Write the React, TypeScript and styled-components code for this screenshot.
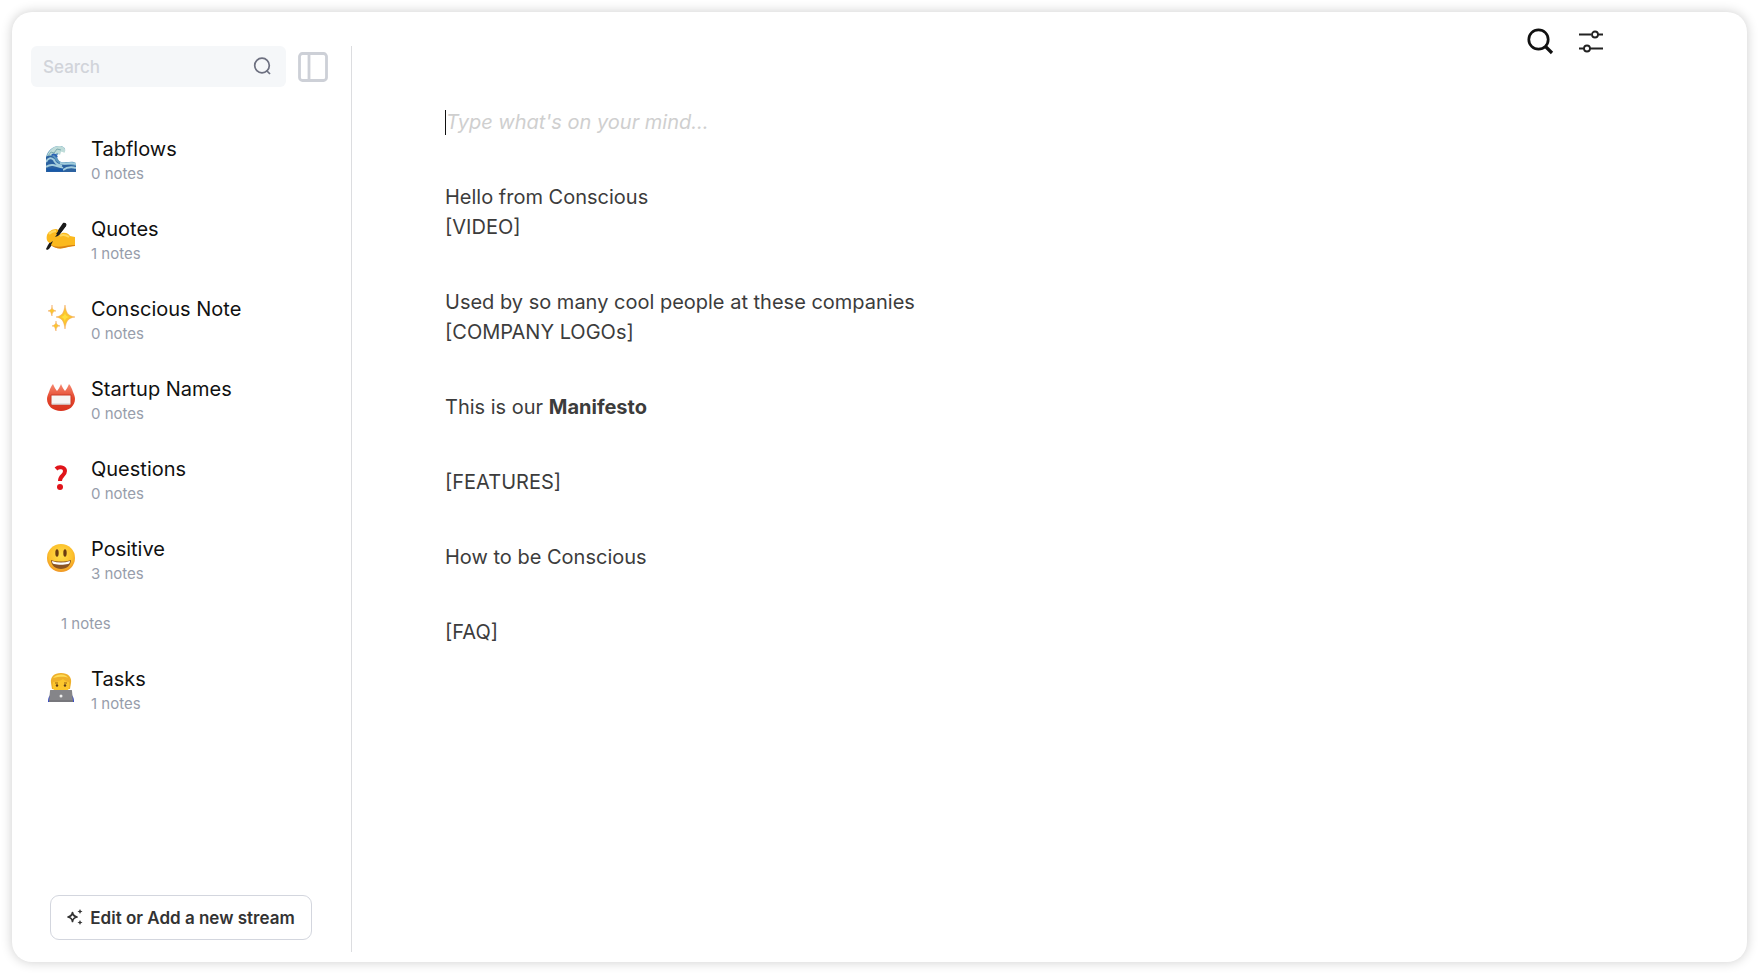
import React from "react";
import styled, { createGlobalStyle } from "styled-components";

const GlobalStyle = createGlobalStyle`
  * { box-sizing: border-box; }
  body {
    margin: 0;
    background: #fff;
    font-family: Inter, "Liberation Sans", sans-serif;
  }
  button, input { font-family: inherit; }
`;

const Page = styled.div`
  display: flex;
  min-height: 100vh;
  padding: 12px;
`;

const Card = styled.div`
  flex: 1;
  display: flex;
  min-width: 0;
  background: #fff;
  border-radius: 20px;
  box-shadow: 0 0 12px rgba(0, 0, 0, 0.2);
`;

const Sidebar = styled.aside`
  flex: none;
  display: flex;
  flex-direction: column;
  width: 321px;
  margin: 34px 0 10px 19px;
  border-right: 1px solid #dcdde0;
`;

const SearchRow = styled.div`
  display: flex;
  align-items: center;
  gap: 12px;
`;

const SearchBox = styled.label`
  display: flex;
  align-items: center;
  width: 255px;
  height: 41px;
  padding: 0 15px 0 12px;
  background: #f5f7f9;
  border-radius: 6px;
`;

const SearchInput = styled.input`
  flex: 1;
  min-width: 0;
  padding: 0;
  border: 0;
  outline: 0;
  background: transparent;
  font-size: 17px;
  font-weight: 500;
  line-height: 24px;
  color: #333;
  &::placeholder { color: #d1d4da; opacity: 1; }
`;

const IconButton = styled.button`
  display: flex;
  padding: 0;
  border: 0;
  background: transparent;
  cursor: pointer;
`;

const StreamList = styled.ul`
  display: flex;
  flex-direction: column;
  gap: 30px;
  margin: 47px 0 0;
  padding: 0 15px;
  list-style: none;
`;

const Stream = styled.li`
  display: flex;
  gap: 15px;
`;

const Emoji = styled.span<{ $empty: boolean }>`
  flex: none;
  width: ${(p) => (p.$empty ? 0 : 30)}px;
  padding-top: ${(p) => (p.$empty ? 0 : 8)}px;
  svg { display: block; }
`;

const StreamTitle = styled.div`
  font-size: 20px;
  line-height: 30px;
  color: #111;
`;

const StreamCount = styled.div`
  font-size: 15px;
  line-height: 20px;
  color: #979dab;
`;

const AddButton = styled.button`
  display: flex;
  align-items: center;
  justify-content: center;
  gap: 7px;
  width: 262px;
  height: 45px;
  margin: auto 0 12px 19px;
  padding: 0;
  border: 1px solid #d3d6de;
  border-radius: 9px;
  background: #fff;
  font-size: 17px;
  font-weight: 600;
  color: #333;
  cursor: pointer;
`;

const Main = styled.main`
  flex: 1;
  min-width: 0;
  display: flex;
  flex-direction: column;
`;

const Toolbar = styled.header`
  display: flex;
  justify-content: flex-end;
  gap: 25px;
  padding: 16px 144px 0 0;
`;

const Editor = styled.div`
  display: flex;
  flex-direction: column;
  gap: 45px;
  padding: 52px 143px 0 93px;
  font-size: 20px;
  line-height: 30px;
  color: #3c3c3c;
`;

const Prompt = styled.div`
  display: flex;
  align-items: center;
`;

const Caret = styled.span`
  width: 1px;
  height: 25px;
  background: #111;
`;

const PromptInput = styled.input`
  flex: 1;
  min-width: 0;
  height: 30px;
  padding: 0;
  border: 0;
  outline: 0;
  background: transparent;
  font-size: 20px;
  line-height: 30px;
  &::placeholder { color: #cfcfcf; opacity: 1; font-style: italic; }
  &:placeholder-shown { font-style: italic; }
`;

const Notes = styled.div`
  display: flex;
  flex-direction: column;
  gap: 45px;
`;

const Note = styled.p`
  margin: 0;
`;

const Wave = () => (
  <svg width="30" height="30" viewBox="0 0 30 30" aria-hidden="true">
    <path d="M0 30V15C2 8 7 4 13 4c4 0 7 2 6 5-2 0-3-1-5 0 1 3-3 3-3 5 1 6 5 7 9 6 4 0 7-1 10 1v9Z" fill="#5c97bd" />
    <path d="M1 14C3 8 8 4 13 4c4 0 7 2 6 6-1 2-2-1-4 0l-1 3-3-2-3 3-2-2-3 4Z" fill="#bfdcd9" />
    <path d="M0 15c4-3 8-1 10 4 4 5 13 3 20 5v6H0Z" fill="#2c62a0" />
    <path d="M0 20c2-4 5-5 8-2 1 4 4 5 8 6M14 21c5 2 10-1 16 1M0 25c5-4 11-1 17 1M17 28c4-3 9-3 13-2" fill="none" stroke="#a3cddd" strokeWidth="2" />
    <path d="m2 14 3-4 3 1 3-4 4 1" fill="none" stroke="#7aa9b0" strokeWidth="1" />
    <path d="M6 13c2-1 4 0 5 2" fill="none" stroke="#2c62b4" strokeWidth="2" />
    <path d="M1 28h16" stroke="#1859a8" strokeWidth="3" />
  </svg>
);

const Writing = () => (
  <svg width="30" height="30" viewBox="0 0 30 30" aria-hidden="true">
    <path d="M17 1c2-1 4 1 3 3L8 20l-5 7-2 1-1-1 2-4L6 17Z" fill="#1b1b1b" />
    <path d="M1 13c1-3 5-6 9-6 2 0 3 2 2 4l-3 4 3-1 4-3c4-1 7 1 8 3l5 1v9c-4 0-7 1-11 2-5 1-10 0-13-3l2-4-3 2c-3-1-4-4-3-8Z" fill="#fbb91e" />
    <path d="M5 23c4 2 9 2 14 1 4-1 7-1 10-1v1c-4 0-7 1-11 2-5 1-10 0-13-3Z" fill="#d98214" />
    <path d="M3 12c2-2 4-3 7-3M14 14c3-2 6-1 9 1" stroke="#ffd85c" strokeWidth="2" fill="none" />
    <path d="M18 1c2 0 3 1 2 3l-7 9-3-1Z" fill="#1b1b1b" />
  </svg>
);

const SparklesEmoji = () => (
  <svg width="30" height="30" viewBox="0 0 30 30" aria-hidden="true">
    <g fill="#fbc52e" stroke="#f0a35c" strokeWidth="0.5">
      <path d="M19 3c1 8 3 11 10 12-7 1-9 4-10 12-1-8-3-11-9-12 6-1 8-4 9-12Z" />
      <path d="M6 3c0 4 1 5 4 6-3 0-4 2-4 5-1-3-1-5-4-5 3-1 4-2 4-6Z" />
      <path d="M10 19c0 3 1 4 4 5-3 0-4 2-4 5-1-3-1-5-4-5 3-1 4-2 4-5Z" />
    </g>
    <path d="M19 10c0 3 1 4 4 5-3 1-4 2-4 5-1-3-1-4-4-5 3-1 4-2 4-5Z" fill="#ffdf3f" />
  </svg>
);

const NameBadge = () => (
  <svg width="30" height="30" viewBox="0 0 30 30" aria-hidden="true">
    <defs>
      <linearGradient id="badge-red" x1="0" y1="0" x2="0" y2="1">
        <stop offset="0" stopColor="#f68a72" />
        <stop offset="0.5" stopColor="#e5492f" />
        <stop offset="1" stopColor="#d9321d" />
      </linearGradient>
    </defs>
    <path d="M7 2c1 2 2 5 4 7 2-2 3-5 4-7 1 2 2 5 4 7 2-2 3-5 4-7 2 2 3 5 4 8 1 2 2 5 2 7 0 7-6 12-14 12S1 24 1 17c0-2 1-5 2-7 1-3 2-6 4-8Z" fill="url(#badge-red)" />
    <path d="M5 13h20v10H5Z" fill="#f7f5f4" stroke="#c93a26" strokeWidth="1" />
    <path d="M6 22h18" stroke="#cfcccc" strokeWidth="1" />
  </svg>
);

const QuestionMark = () => (
  <svg width="30" height="30" viewBox="0 0 30 30" aria-hidden="true">
    <path d="M10 7c3-3 9-2 9 2 0 5-5 4-5 10" fill="none" stroke="#e0141a" strokeWidth="4" />
    <circle cx="14" cy="25" r="3" fill="#e0141a" />
  </svg>
);

const Smiley = () => (
  <svg width="30" height="30" viewBox="0 0 30 30" aria-hidden="true">
    <defs>
      <radialGradient id="face-gold" cx="0.5" cy="0.4" r="0.6">
        <stop offset="0" stopColor="#ffe04a" />
        <stop offset="0.7" stopColor="#fcc02c" />
        <stop offset="1" stopColor="#ef9524" />
      </radialGradient>
    </defs>
    <circle cx="15" cy="16" r="14" fill="url(#face-gold)" />
    <ellipse cx="11" cy="11" rx="1.7" ry="3.7" fill="#6c3d10" />
    <ellipse cx="19" cy="11" rx="1.7" ry="3.7" fill="#6c3d10" />
    <path d="M5 18c6 2 14 2 20 0 0 5-4 9-10 9S5 23 5 18Z" fill="#8a5424" />
    <path d="M6 19c6 2 12 2 18 0 0 2-1 3-2 3-4 1-10 1-14 0-1 0-2-1-2-3Z" fill="#fff" />
  </svg>
);

const Technologist = () => (
  <svg width="30" height="30" viewBox="0 0 30 30" aria-hidden="true">
    <path d="M2 30c0-5 2-9 7-9h12c5 0 7 4 7 9Z" fill="#3045c4" />
    <path d="M5 11C4 5 8 1 15 1s11 4 10 10l-1 6H6Z" fill="#eeb02a" />
    <path d="M7 10c4 0 7-1 10-3 2 2 4 3 6 3 1 8-2 12-8 12S6 18 7 10Z" fill="#fcc62d" />
    <path d="M7 6c5-5 13-4 15 0-4-2-9-1-15 0Z" fill="#ffdc57" />
    <path d="M9 11h3M18 11h3" stroke="#966115" />
    <circle cx="11" cy="13.5" r="1.2" fill="#5d3a18" />
    <circle cx="19" cy="13.5" r="1.2" fill="#5d3a18" />
    <path d="M5 18h20c1 0 1 0 1 1l1 10H3l1-10c0-1 0-1 1-1Z" fill="#858589" />
    <path d="M3 28h24v2H3Z" fill="#77777c" />
    <circle cx="15" cy="24" r="1.5" fill="#eee" />
  </svg>
);

const SmallSearchIcon = () => (
  <svg width="18" height="20" viewBox="0 0 18 20" fill="none" stroke="#6d7080" strokeWidth="1.7" aria-hidden="true">
    <circle cx="9" cy="8.500" r="7.300" />
    <path d="m13.500 13.500 3.500 3.500" />
  </svg>
);

const PanelIcon = () => (
  <svg width="30" height="30" viewBox="0 0 30 30" fill="none" stroke="#cdd0d7" aria-hidden="true">
    <rect x="1.500" y="1.500" width="27" height="27" rx="3" strokeWidth="2.800" />
    <path d="M11 2v26" strokeWidth="2.800" />
  </svg>
);

const SearchIcon = () => (
  <svg width="27" height="27" viewBox="0 0 27 27" fill="none" stroke="#111" strokeWidth="2.700" aria-hidden="true">
    <circle cx="11.500" cy="11.500" r="9.700" />
    <path d="m18.500 18.500 6.500 6.500" strokeWidth="3.200" />
  </svg>
);

const SlidersIcon = () => (
  <svg width="24" height="27" viewBox="0 0 24 27" fill="none" stroke="#222" strokeWidth="1.800" aria-hidden="true">
    <path d="M0 6.500h12.500M19 6.500h5M0 20.500h5M11 20.500h13" />
    <circle cx="16" cy="6.500" r="3" />
    <circle cx="8" cy="20.500" r="3" />
  </svg>
);

const SparkleIcon = () => (
  <svg width="16" height="18" viewBox="0 0 16 18" aria-hidden="true">
    <path d="M5.500 3.500C6 6.500 7 7.500 10 8c-3 .5-4 1.500-4.500 4.500C5 9.500 4 8.500 1 8c3-.5 4-1.500 4.500-4.500Z" fill="none" stroke="#333" strokeWidth="1.700" strokeLinejoin="round" />
    <path d="m13 0 .8 1.700 1.700.8-1.700.8L13 5l-.8-1.700-1.700-.8 1.700-.8ZM13 11l.8 1.700 1.700.8-1.700.8L13 16l-.8-1.700-1.700-.8 1.700-.8Z" fill="#333" />
  </svg>
);

const streams = [
  { title: "Tabflows", count: 0, Icon: Wave },
  { title: "Quotes", count: 1, Icon: Writing },
  { title: "Conscious Note", count: 0, Icon: SparklesEmoji },
  { title: "Startup Names", count: 0, Icon: NameBadge },
  { title: "Questions", count: 0, Icon: QuestionMark },
  { title: "Positive", count: 3, Icon: Smiley },
  { title: "", count: 1, Icon: null },
  { title: "Tasks", count: 1, Icon: Technologist },
];

export default function App() {
  return (
    <>
      <GlobalStyle />
      <Page>
        <Card>
          <Sidebar>
            <SearchRow>
              <SearchBox>
                <SearchInput type="text" placeholder="Search" aria-label="Search streams" />
                <SmallSearchIcon />
              </SearchBox>
              <IconButton type="button" aria-label="Toggle sidebar">
                <PanelIcon />
              </IconButton>
            </SearchRow>
            <StreamList>
              {streams.map(({ title, count, Icon }, i) => (
                <Stream key={i}>
                  <Emoji $empty={!Icon}>{Icon && <Icon />}</Emoji>
                  <div>
                    {title && <StreamTitle>{title}</StreamTitle>}
                    <StreamCount>{count} notes</StreamCount>
                  </div>
                </Stream>
              ))}
            </StreamList>
            <AddButton type="button">
              <SparkleIcon />
              Edit or Add a new stream
            </AddButton>
          </Sidebar>
          <Main>
            <Toolbar>
              <IconButton type="button" aria-label="Search notes">
                <SearchIcon />
              </IconButton>
              <IconButton type="button" aria-label="Settings">
                <SlidersIcon />
              </IconButton>
            </Toolbar>
            <Editor>
              <Prompt>
                <Caret />
                <PromptInput type="text" placeholder="Type what's on your mind..." aria-label="New note" />
              </Prompt>
              <Notes>
                <Note>
                  Hello from Conscious
                  <br />
                  [VIDEO]
                </Note>
                <Note>
                  Used by so many cool people at these companies
                  <br />
                  [COMPANY LOGOs]
                </Note>
                <Note>
                  This is our <strong>Manifesto</strong>
                </Note>
                <Note>[FEATURES]</Note>
                <Note>How to be Conscious</Note>
                <Note>[FAQ]</Note>
              </Notes>
            </Editor>
          </Main>
        </Card>
      </Page>
    </>
  );
}
